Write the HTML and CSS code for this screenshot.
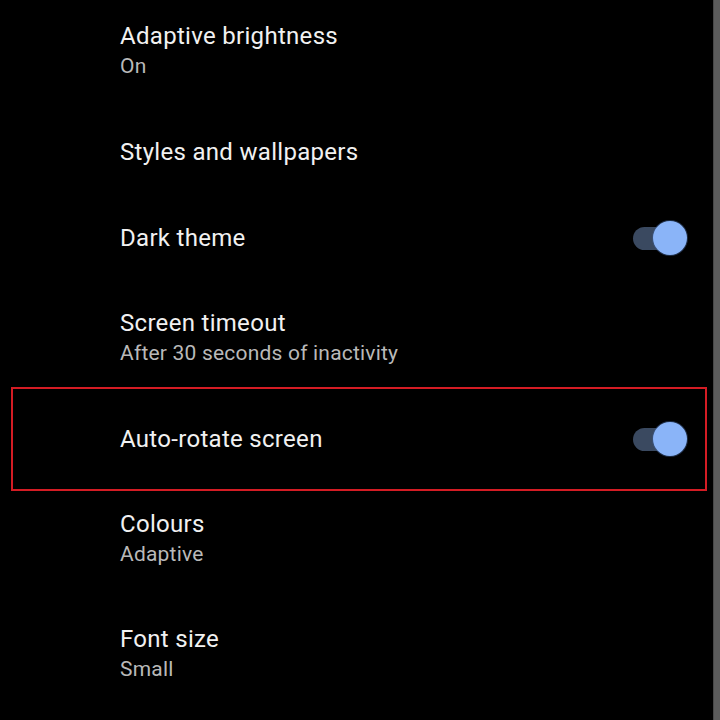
FILE: index.html
```html
<!DOCTYPE html>
<html lang="en">
<head>
    <meta charset="UTF-8">
    <meta name="viewport" content="width=device-width, initial-scale=1.0">
    <title>Display settings</title>
    <link rel="stylesheet" href="styles.css">
</head>
<body>

<div class="screen">
    <main class="settings-list">
        <div class="setting two-line">
            <div class="setting-text">
                <div class="title">Adaptive brightness</div>
                <div class="summary">On</div>
            </div>
        </div>

        <div class="setting">
            <div class="setting-text">
                <div class="title">Styles and wallpapers</div>
            </div>
        </div>

        <div class="setting">
            <div class="setting-text">
                <div class="title">Dark theme</div>
            </div>
            <span class="switch on"><span class="thumb"></span></span>
        </div>

        <div class="setting two-line">
            <div class="setting-text">
                <div class="title">Screen timeout</div>
                <div class="summary">After 30 seconds of inactivity</div>
            </div>
        </div>

        <div class="setting highlighted">
            <div class="setting-text">
                <div class="title">Auto-rotate screen</div>
            </div>
            <span class="switch on"><span class="thumb"></span></span>
        </div>

        <div class="setting two-line">
            <div class="setting-text">
                <div class="title">Colours</div>
                <div class="summary">Adaptive</div>
            </div>
        </div>

        <div class="setting two-line">
            <div class="setting-text">
                <div class="title">Font size</div>
                <div class="summary">Small</div>
            </div>
        </div>
    </main>
    <div class="edge"></div>
</div>

</body>
</html>
```

FILE: styles.css
```css
:root {
    --bg-color: #000000;
    --title-color: #f1f1f1;
    --summary-color: #b9b9b9;
    --switch-track: #3a4960;
    --switch-thumb: #8ab4f8;
    --mark-color: #d41c24;
    --font-sans: Roboto, 'Liberation Sans', sans-serif;
}

/* --- Resets --- */
* { margin: 0; padding: 0; box-sizing: border-box; }
html, body { height: 100%; }
body {
    background-color: var(--bg-color);
    font-family: var(--font-sans);
    overflow: hidden;
}

.screen {
    display: flex;
    height: 720px;
}

/* --- Settings list --- */
.settings-list {
    flex: 1;
    margin-top: -6px;
    display: flex;
    flex-direction: column;
}

.setting {
    position: relative;
    display: flex;
    align-items: center;
    height: 86px;
    padding: 0 26px 0 120px;
    flex-shrink: 0;
}
.setting.two-line {
    height: 115px;
}

.setting-text {
    flex: 1;
    margin-top: -1px;
}
.title {
    color: var(--title-color);
    font-size: 24px;
    line-height: 30px;
    letter-spacing: 0.3px;
}
.summary {
    color: var(--summary-color);
    font-size: 21px;
    line-height: 30px;
    letter-spacing: 0.2px;
}

/* --- Switch --- */
.switch {
    position: relative;
    display: block;
    width: 54px;
    height: 34px;
}
.switch::before {
    content: '';
    position: absolute;
    left: 0;
    top: 6px;
    width: 46px;
    height: 23px;
    border-radius: 12px;
    background-color: var(--switch-track);
}
.switch .thumb {
    position: absolute;
    right: 0;
    top: 0;
    width: 34px;
    height: 34px;
    border-radius: 50%;
    background-color: var(--switch-thumb);
    box-shadow: 0 0 0 1px rgba(60, 90, 140, 0.5);
}

/* --- Annotation box --- */
.highlighted::after {
    content: '';
    position: absolute;
    top: -9px;
    bottom: -9px;
    left: 11px;
    right: 6px;
    border: 2px solid var(--mark-color);
    pointer-events: none;
}

/* --- Scroll edge --- */
.edge {
    width: 7px;
    background-color: #5b5b5b;
    border-left: 1px solid #474747;
}
```
